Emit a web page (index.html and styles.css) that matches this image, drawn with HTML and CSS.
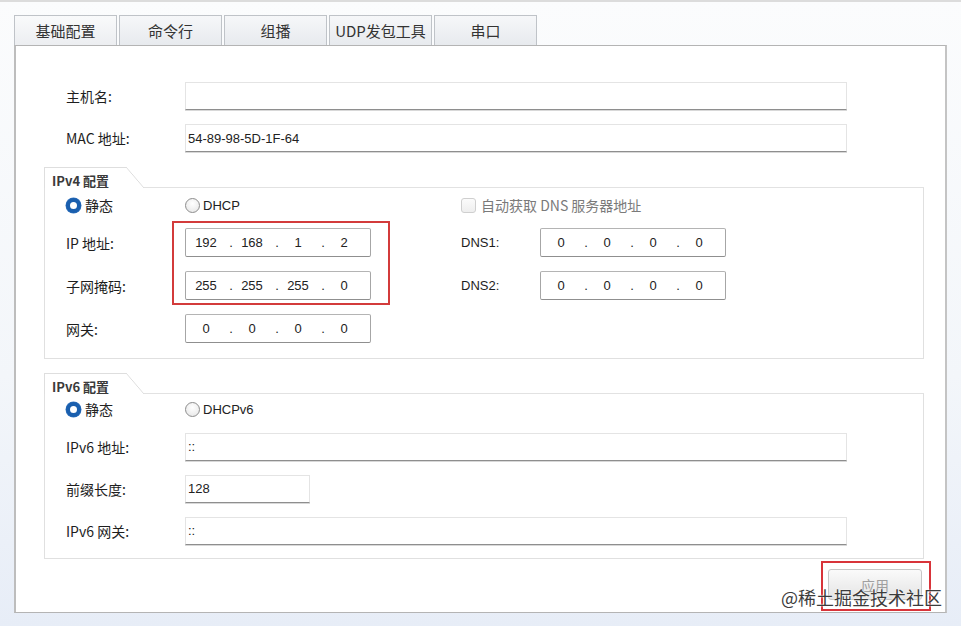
FILE: index.html
```html
<!DOCTYPE html>
<html lang="zh-CN">
<head>
<meta charset="utf-8">
<title>基础配置</title>
<link rel="stylesheet" href="styles.css">
</head>
<body>
<div class="page">
  <div class="tabs">
    <div class="tab active">基础配置</div>
    <div class="tab">命令行</div>
    <div class="tab">组播</div>
    <div class="tab">UDP发包工具</div>
    <div class="tab">串口</div>
  </div>
  <div class="panel">
    <div class="top-rows">
      <div class="row"><span class="label">主机名:</span><div class="field wide"></div></div>
      <div class="row"><span class="label">MAC 地址:</span><div class="field wide">54-89-98-5D-1F-64</div></div>
    </div>

    <section class="group g4">
      <div class="legend-row"><div class="legend">IPv4 配置</div><div class="slant"></div><div class="legend-fill"></div></div>
      <div class="group-body grid4">
        <div class="radio-item"><span class="radio on"></span><span class="rtext">静态</span></div>
        <div class="radio-item"><span class="radio"></span><span class="rtext latin">DHCP</span></div>
        <div></div>
        <div class="check-item span2"><span class="check"></span><span class="ctext">自动获取 DNS 服务器地址</span></div>

        <span class="label">IP 地址:</span>
        <div class="ip"><span>192</span><i>.</i><span>168</span><i>.</i><span>1</span><i>.</i><span>2</span></div>
        <div></div>
        <span class="label latin">DNS1:</span>
        <div class="ip"><span>0</span><i>.</i><span>0</span><i>.</i><span>0</span><i>.</i><span>0</span></div>

        <span class="label">子网掩码:</span>
        <div class="ip"><span>255</span><i>.</i><span>255</span><i>.</i><span>255</span><i>.</i><span>0</span></div>
        <div></div>
        <span class="label latin">DNS2:</span>
        <div class="ip"><span>0</span><i>.</i><span>0</span><i>.</i><span>0</span><i>.</i><span>0</span></div>

        <span class="label">网关:</span>
        <div class="ip"><span>0</span><i>.</i><span>0</span><i>.</i><span>0</span><i>.</i><span>0</span></div>

        <div class="mark-box"></div>
      </div>
    </section>

    <section class="group g6">
      <div class="legend-row"><div class="legend">IPv6 配置</div><div class="slant"></div><div class="legend-fill"></div></div>
      <div class="group-body grid6">
        <div class="radio-pair">
          <div class="radio-item"><span class="radio on"></span><span class="rtext">静态</span></div>
          <div class="radio-item"><span class="radio"></span><span class="rtext latin">DHCPv6</span></div>
        </div>
        <span class="label">IPv6 地址:</span><div class="field wide">::</div>
        <span class="label">前缀长度:</span><div class="field short">128</div>
        <span class="label">IPv6 网关:</span><div class="field wide">::</div>
      </div>
    </section>

    <div class="actions">
      <div class="btn-mark"><button class="btn" type="button">应用</button></div>
    </div>
  </div>
  <div class="watermark">@稀土掘金技术社区</div>
</div>
</body>
</html>
```

FILE: styles.css
```css
* { box-sizing: border-box; }
html, body { margin: 0; padding: 0; }
body {
  width: 961px;
  height: 626px;
  overflow: hidden;
  border-top: 2px solid #dcdcdc;
  background: linear-gradient(to bottom, #fbfcfd 0%, #f3f6fa 60%, #e7edf7 100%);
  font-family: "Noto Sans CJK SC", "Liberation Sans", sans-serif;
  font-size: 14px;
  color: #222;
}
.page {
  position: relative;
  padding: 13px 14px 0 14px;
  height: 624px;
}

/* tabs */
.tabs {
  display: flex;
  gap: 2px;
  height: 30px;
}
.tab {
  width: 103px;
  height: 30px;
  border: 1px solid #bfc3c8;
  border-bottom: none;
  background: linear-gradient(to bottom, #f6f7f9, #e7eaee);
  display: flex;
  align-items: center;
  justify-content: center;
  font-size: 15px;
  color: #333;
  padding-bottom: 1px;
}
.tab.active {
  background: linear-gradient(to bottom, #f9fafb, #eceef1);
}

/* main panel */
.panel {
  width: 933px;
  height: 568px;
  border: 1px solid #b4b4b4;
  border-left: 2px solid #bdbdbd;
  border-right: 2px solid #c4c4c4;
  background: #fff;
  padding: 36px 22px 1px 28px;
}
.top-rows {
  padding-left: 22px;
  display: flex;
  flex-direction: column;
  gap: 14px;
}
.row {
  display: grid;
  grid-template-columns: 119px 662px;
  align-items: center;
}
.label {
  font-size: 14px;
  color: #1e1e1e;
  white-space: nowrap;
}
.latin { font-family: "Liberation Sans", sans-serif; font-size: 13px; }

.field {
  height: 28px;
  background: #fff;
  border: 1px solid #e4e4e4;
  border-bottom: 1px solid #8e8e8e;
  box-shadow: 0 1px 0 #d8d8d8;
  font-family: "Liberation Sans", sans-serif;
  font-size: 13px;
  color: #222;
  display: flex;
  align-items: center;
  padding-left: 2px;
}
.field.wide { width: 662px; }
.field.short { width: 125px; }

/* groups */
.group { width: 880px; }
.g4 { margin-top: 15px; }
.g6 { margin-top: 14px; }
.legend-row {
  display: flex;
  height: 21px;
}
.legend {
  width: 82px;
  border-top: 1px solid #dedede;
  border-left: 1px solid #dedede;
  font-weight: bold;
  font-size: 13px;
  color: #3a3a3a;
  padding: 3px 0 0 7px;
  white-space: nowrap;
}
.slant {
  width: 18px;
  background: linear-gradient(to top right, transparent calc(50% - 0.7px), #dcdcdc 50%, transparent calc(50% + 0.7px));
}
.legend-fill {
  flex: 1;
  border-bottom: 1px solid #e2e2e2;
  height: 21px;
}
.group-body {
  position: relative;
  border: 1px solid #e0e0e0;
  border-top: none;
}
.grid4 {
  display: grid;
  grid-template-columns: 119px 186px 90px 79px 187px;
  grid-template-rows: 18px 29px 29px 29px;
  row-gap: 14px;
  align-items: center;
  padding: 8px 0 15px 21px;
}
.grid6 {
  display: grid;
  grid-template-columns: 119px 662px;
  grid-template-rows: 18px 27px 27px 27px;
  row-gap: 15px;
  align-items: center;
  padding: 6px 0 14px 21px;
}
.radio-pair {
  grid-column: 1 / 3;
  display: grid;
  grid-template-columns: 119px 200px;
  align-items: center;
}
.span2 { grid-column: 4 / 6; }

.radio-item, .check-item {
  display: flex;
  align-items: center;
  height: 18px;
}
.radio {
  width: 15px;
  height: 15px;
  border-radius: 50%;
  border: 1px solid #8d8d8d;
  background: radial-gradient(circle at 50% 35%, #ffffff, #e4e4e4);
  flex: none;
}
.radio.on {
  border: 4px solid #1a5fae;
  background: #fff;
  box-shadow: 0 0 0 0.5px #3a78c0;
}
.rtext { margin-left: 4px; font-size: 14px; color: #222; }
.rtext.latin { margin-left: 3px; font-size: 13px; }
.check {
  width: 15px;
  height: 15px;
  border: 1px solid #cfcfcf;
  border-radius: 3px;
  background: linear-gradient(to bottom, #fbfbfb, #eeeeee);
  flex: none;
}
.ctext { margin-left: 5px; font-size: 14px; color: #7a7a7a; white-space: nowrap; }

.ip {
  width: 186px;
  height: 29px;
  border: 1px solid #a6a6a6;
  border-top-color: #b4b4b4;
  border-bottom-color: #8f8f8f;
  border-radius: 2px;
  background: #fff;
  display: flex;
  align-items: center;
  padding-left: 3px;
  font-family: "Liberation Sans", sans-serif;
  font-size: 13px;
  color: #222;
}
.ip span { width: 34px; text-align: center; }
.ip i { font-style: normal; width: 12px; text-align: center; padding-left: 4px; }

/* annotation overlay */
.mark-box {
  position: absolute;
  left: 127px;
  top: 33px;
  width: 218px;
  height: 84px;
  border: 2px solid #d33b3b;
  pointer-events: none;
}

/* actions */
.actions {
  display: flex;
  justify-content: flex-end;
  margin-top: 2px;
  margin-right: -8px;
}
.btn-mark {
  width: 110px;
  height: 50px;
  border: 2px solid #d8343a;
  padding: 6px 7px 0 5px;
}
.btn {
  width: 94px;
  height: 31px;
  border: 1px solid #c6c6c6;
  border-radius: 3px;
  background: linear-gradient(to bottom, #fafafa, #e4e4e4);
  font-family: "Noto Sans CJK SC", sans-serif;
  font-size: 14px;
  color: #a0a0a0;
  padding: 0;
}

.watermark {
  position: absolute;
  left: 781px;
  top: 582px;
  font-family: "Noto Sans CJK SC", sans-serif;
  font-size: 18px;
  color: #3c3c3c;
  text-shadow: 0 0 2px #fff, 0 0 1px #fff;
  white-space: nowrap;
}
```
